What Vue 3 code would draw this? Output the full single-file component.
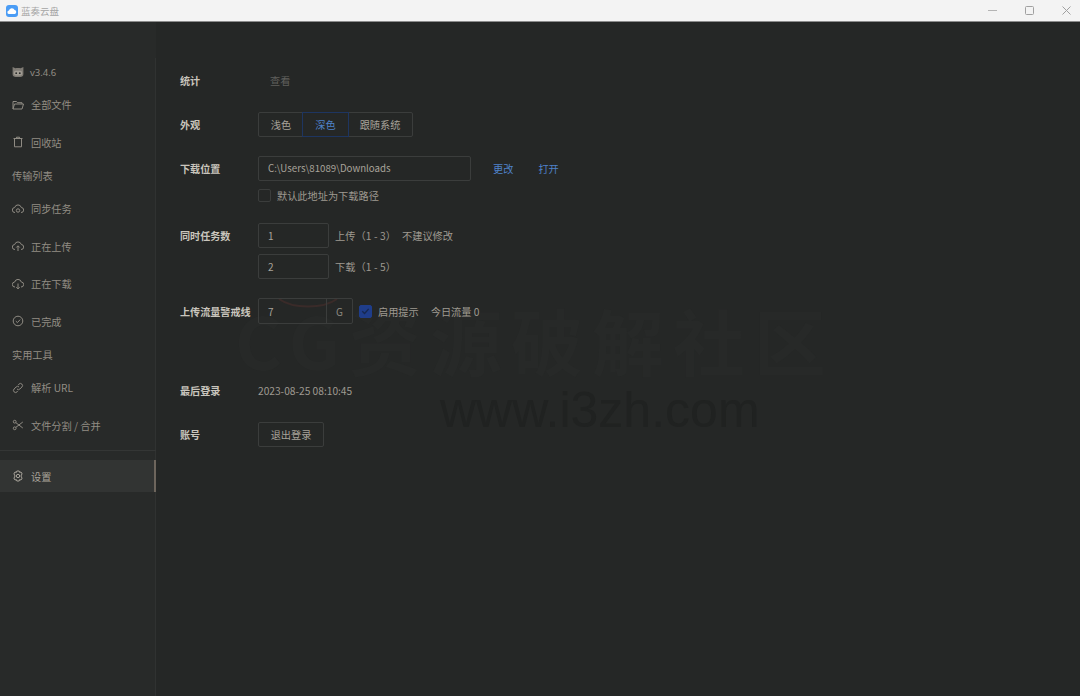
<script setup>
const navGroups = [
  { kind: 'item', icon: 'cat', label: 'v3.4.6', h: 28 },
  { kind: 'item', icon: 'folder', label: '全部文件', h: 37.5 },
  { kind: 'item', icon: 'trash', label: '回收站', h: 37.5 },
  { kind: 'head', label: '传输列表' },
  { kind: 'item', icon: 'sync', label: '同步任务', h: 37.5 },
  { kind: 'item', icon: 'up', label: '正在上传', h: 37.5 },
  { kind: 'item', icon: 'down', label: '正在下载', h: 37.5 },
  { kind: 'item', icon: 'check', label: '已完成', h: 37.5 },
  { kind: 'head', label: '实用工具' },
  { kind: 'item', icon: 'link', label: '解析 URL', h: 37.5 },
  { kind: 'item', icon: 'cut', label: '文件分割 / 合并', h: 37.5 }
]
</script>

<template>
  <div class="app">
    <header class="titlebar">
      <svg class="logo" viewBox="0 0 12 12" width="12" height="12">
        <rect width="12" height="12" rx="3" fill="#4a9cf5" />
        <path d="M3.2 9a1.7 1.7 0 0 1-.2-3.4 2.9 2.9 0 0 1 5.6-.5A2 2 0 0 1 8.8 9z" fill="#fff" />
      </svg>
      <span class="apptitle">蓝奏云盘</span>
      <div class="winbtns">
        <svg width="9" height="9" viewBox="0 0 9 9"><path d="M0 4.500h9" stroke="#b4b4b4" /></svg>
        <svg width="9" height="9" viewBox="0 0 9 9"><rect x=".5" y=".5" width="8" height="8" rx="1" fill="none" stroke="#a0a0a0" /></svg>
        <svg width="9" height="9" viewBox="0 0 9 9"><path d="M.5.500l8 8M8.500.500l-8 8" stroke="#a0a0a0" /></svg>
      </div>
    </header>

    <div class="body">
      <aside class="side">
        <nav class="nav">
          <template v-for="n in navGroups" :key="n.label">
            <div v-if="n.kind === 'head'" class="nav-head">{{ n.label }}</div>
            <div v-else class="nav-item" :style="{ height: n.h + 'px' }">
              <svg class="ic" viewBox="0 0 12 12" width="12" height="12" fill="none" stroke="#8f8b83" stroke-width="1">
                <template v-if="n.icon === 'cat'">
                  <path d="M.6 1l2.800 1.300c1.500-.3 3.700-.3 5.200 0L11.400 1v7.200c0 1.800-1.400 2.800-3 2.800H3.600c-1.600 0-3-1-3-2.800z" fill="#7f7b74" stroke="none" />
                  <rect x="1.800" y="4.800" width="8.400" height="4.800" rx="2" fill="#a09b92" stroke="none" />
                  <circle cx="4.200" cy="7.200" r=".9" fill="#282a29" stroke="none" />
                  <circle cx="7.800" cy="7.200" r=".9" fill="#282a29" stroke="none" />
                </template>
                <path v-else-if="n.icon === 'folder'" d="M1 10V2.500h3.500l1 1.200H10V5M1 10l1.500-5H11.500L10 10z" />
                <path v-else-if="n.icon === 'trash'" d="M1.500 2.500h9M4.500 2.500V1.200h3v1.300M2.500 2.500v8.300h7V2.500" />
                <template v-else-if="n.icon === 'sync'">
                  <path d="M3 9.500a2.500 2.500 0 0 1-.3-5 3.400 3.400 0 0 1 6.600 0 2.500 2.500 0 0 1-.3 5" />
                  <circle cx="6" cy="7.500" r="1.700" />
                </template>
                <path v-else-if="n.icon === 'up'" d="M3 9.500a2.500 2.500 0 0 1-.3-5 3.400 3.400 0 0 1 6.600 0 2.500 2.500 0 0 1-.3 5M6 11V6M4.300 7.500L6 5.800l1.700 1.700" />
                <path v-else-if="n.icon === 'down'" d="M3 9a2.500 2.500 0 0 1-.3-5 3.400 3.400 0 0 1 6.600 0 2.500 2.500 0 0 1-.3 5M6 5.500v5.300M4.300 9.200L6 10.900l1.700-1.700" />
                <template v-else-if="n.icon === 'check'">
                  <circle cx="6" cy="6" r="4.800" />
                  <path d="M3.800 6.100l1.600 1.500 2.800-3" />
                </template>
                <path v-else-if="n.icon === 'link'" d="M5 7a2 2 0 0 0 2.900 0l2-2A2 2 0 0 0 7 2.100l-.8.800M7 5a2 2 0 0 0-2.900 0l-2 2A2 2 0 0 0 5 9.900l.8-.8" />
                <template v-else-if="n.icon === 'cut'">
                  <circle cx="2.700" cy="2.700" r="1.400" />
                  <circle cx="2.700" cy="9.300" r="1.400" />
                  <path d="M3.800 3.600l7 5.400M3.800 8.400l7-5.400" />
                </template>
              </svg>
              <span :class="{ ver: n.icon === 'cat' }">{{ n.label }}</span>
            </div>
          </template>
        </nav>
        <div class="divider"></div>
        <div class="nav-item active">
          <svg class="ic" viewBox="0 0 12 12" width="12" height="12" fill="none" stroke="#a8a39a" stroke-width="1">
            <path d="M4.800 1h2.400l.4 1.400 1.400-.4 1.200 2-1 1 0 2 1 1-1.200 2-1.400-.4L7.200 11H4.800l-.4-1.400-1.400.4-1.200-2 1-1v-2l-1-1 1.200-2 1.400.4z" stroke-linejoin="round" />
            <circle cx="6" cy="6" r="1.700" />
          </svg>
          <span>设置</span>
        </div>
      </aside>

      <main class="main">
        <div class="mark">
          <svg class="arc" width="60" height="10" viewBox="0 0 60 10"><path d="M1 1c14 10 44 10 58 0" fill="none" stroke="#3a2b29" stroke-width="2" /></svg>
          <div class="mark-cn">CG资源破解社区</div>
          <div class="mark-url">www.i3zh.com</div>
        </div>

        <div class="row r-stat">
          <label>统计</label>
          <span class="muted">查看</span>
        </div>

        <div class="row r-look">
          <label>外观</label>
          <div class="seg">
            <span class="seg-btn">浅色</span>
            <span class="seg-btn on">深色</span>
            <span class="seg-btn wide">跟随系统</span>
          </div>
        </div>

        <div class="row r-path">
          <label>下载位置</label>
          <div class="box path">C:\Users\81089\Downloads</div>
          <a class="lnk first">更改</a>
          <a class="lnk">打开</a>
        </div>
        <div class="row r-default">
          <label></label>
          <span class="cb"></span>
          <span class="txt cb-txt">默认此地址为下载路径</span>
        </div>

        <div class="row r-task">
          <label>同时任务数</label>
          <div class="box num">1</div>
          <span class="txt after">上传（1 - 3）</span>
          <span class="txt warn">不建议修改</span>
        </div>
        <div class="row r-task2">
          <label></label>
          <div class="box num">2</div>
          <span class="txt after">下载（1 - 5）</span>
        </div>

        <div class="row r-limit">
          <label>上传流量警戒线</label>
          <div class="group">
            <span class="g-val">7</span>
            <span class="g-unit">G</span>
          </div>
          <span class="cb on">
            <svg width="12" height="12" viewBox="0 0 12 12"><path d="M2.500 6.200l2.500 2.500 4.500-5" fill="none" stroke="#17284f" stroke-width="1.500" /></svg>
          </span>
          <span class="txt on-txt">启用提示</span>
          <span class="txt today">今日流量 0</span>
        </div>

        <div class="row r-login">
          <label>最后登录</label>
          <span class="txt">2023-08-25 08:10:45</span>
        </div>

        <div class="row r-acc">
          <label>账号</label>
          <div class="box btn">退出登录</div>
        </div>
      </main>
    </div>
  </div>
</template>

<style>
html, body { margin: 0; background: #252726; }
</style>

<style scoped>
.app {
  width: 1080px;
  height: 696px;
  overflow: hidden;
  display: flex;
  flex-direction: column;
  font-family: "Noto Sans CJK SC", "Noto Sans", sans-serif;
  font-size: 10px;
  color: #a8a39a;
}
.titlebar {
  height: 21px;
  flex: none;
  display: flex;
  align-items: center;
  padding-left: 6px;
  background: #f3f3f3;
  border-bottom: 1px solid #8c8c8c;
}
.logo { margin-right: 3px; }
.apptitle { color: #a4a4a4; font-size: 9.500px; }
.winbtns { margin-left: auto; display: flex; gap: 28px; padding-right: 9px; }

.body { flex: 1; display: flex; min-height: 0; }
.side {
  width: 155px;
  flex: none;
  background: #282a29 linear-gradient(#303231, #303231) right 36px / 1px 100% no-repeat;
  padding-top: 36px;
  padding-right: 1px;
  box-sizing: content-box;
}
.nav-item {
  display: flex;
  align-items: center;
  padding-left: 12px;
  color: #928d84;
  font-size: 10.200px;
}
.ic { margin-right: 7px; flex: none; }
.ver { font-family: "Noto Sans", sans-serif; font-size: 9.500px; margin-left: -1px; }
.nav-head {
  height: 29px;
  line-height: 29px;
  padding-left: 12px;
  color: #928d84;
  font-size: 10.200px;
}
.divider { height: 1px; background: #343635; margin-top: 6px; margin-bottom: 9px; margin-right: -1px; }
.nav-item.active {
  height: 32px;
  background: #323433;
  border-right: 2px solid #6d655c;
  margin-right: -1px;
  color: #a8a39a;
}

.main { flex: 1; position: relative; padding-left: 24px; background: #252726; }
.row { display: flex; align-items: center; position: relative; z-index: 1; }
.row label {
  width: 78px;
  flex: none;
  color: #c9c5bd;
  font-weight: 700;
  font-size: 10.100px;
  white-space: nowrap;
}
.txt { color: #9f9a91; font-size: 10.200px; white-space: nowrap; }
.muted { color: #5f5f5c; margin-left: 12px; font-size: 10.200px; }
.r-stat { margin-top: 49px; height: 18px; }
.r-look { margin-top: 22px; height: 26px; }
.seg { display: flex; height: 25px; width: 155px; border: 1px solid #3b3d3c; border-radius: 2px; box-sizing: border-box; }
.seg-btn {
  display: flex;
  align-items: center;
  justify-content: center;
  width: 44px;
  color: #a8a39a;
  font-size: 10.200px;
}
.seg-btn.wide { flex: 1; width: auto; }
.seg-btn.on {
  width: 45px;
  color: #4f82c9;
  outline: 1px solid #1e3560;
}
.box {
  box-sizing: border-box;
  border: 1px solid #3b3d3c;
  border-radius: 2px;
  display: flex;
  align-items: center;
  color: #a8a39a;
  font-size: 10px;
}
.r-path { margin-top: 18px; height: 26px; }
.path { width: 213px; height: 25px; padding-left: 9px; font-size: 9.700px; }
.lnk { color: #4f82c9; font-size: 10.200px; margin-left: 25px; }
.lnk.first { margin-left: 22px; }
.r-default { height: 18px; margin-top: 5px; }
.cb {
  width: 13px;
  height: 13px;
  box-sizing: border-box;
  border: 1px solid #3b3d3c;
  border-radius: 2px;
  display: inline-flex;
  align-items: center;
  justify-content: center;
  flex: none;
}
.cb.on { background: #1f3d8a; border-color: #1f3d8a; margin-left: 6px; }
.cb-txt { margin-left: 6px; }
.r-task { margin-top: 19px; height: 25px; }
.num { width: 71px; height: 25px; padding-left: 9px; }
.after { margin-left: 6px; letter-spacing: .1px; }
.warn { margin-left: 6px; }
.r-task2 { margin-top: 6px; height: 25px; }
.r-limit { margin-top: 19px; height: 26px; }
.group {
  display: flex;
  width: 95px;
  height: 26px;
  box-sizing: border-box;
  border: 1px solid #3b3d3c;
  border-radius: 2px;
  align-items: stretch;
}
.g-val { flex: 1; display: flex; align-items: center; padding-left: 9px; color: #a8a39a; }
.g-unit { width: 25px; display: flex; align-items: center; justify-content: center; border-left: 1px solid #3b3d3c; color: #8f8b83; }
.on-txt { margin-left: 6px; }
.today { margin-left: 12px; }
.r-login { margin-top: 57px; height: 18px; }
.r-acc { margin-top: 22px; height: 26px; }
.btn { width: 66px; height: 25px; justify-content: center; font-size: 10.200px; }

.mark { position: absolute; left: 79px; top: 276px; width: 640px; z-index: 0; pointer-events: none; }
.arc { position: absolute; left: 43px; top: 0; }
.mark-cn { color: #272928; font-size: 72px; line-height: 78px; height: 78px; font-weight: 700; white-space: nowrap; letter-spacing: 9px; padding-top: 2px; }
.mark-url { color: #202221; font-family: "Liberation Sans", sans-serif; font-size: 50px; line-height: 48px; margin-top: 8px; margin-left: 205px; }
</style>
